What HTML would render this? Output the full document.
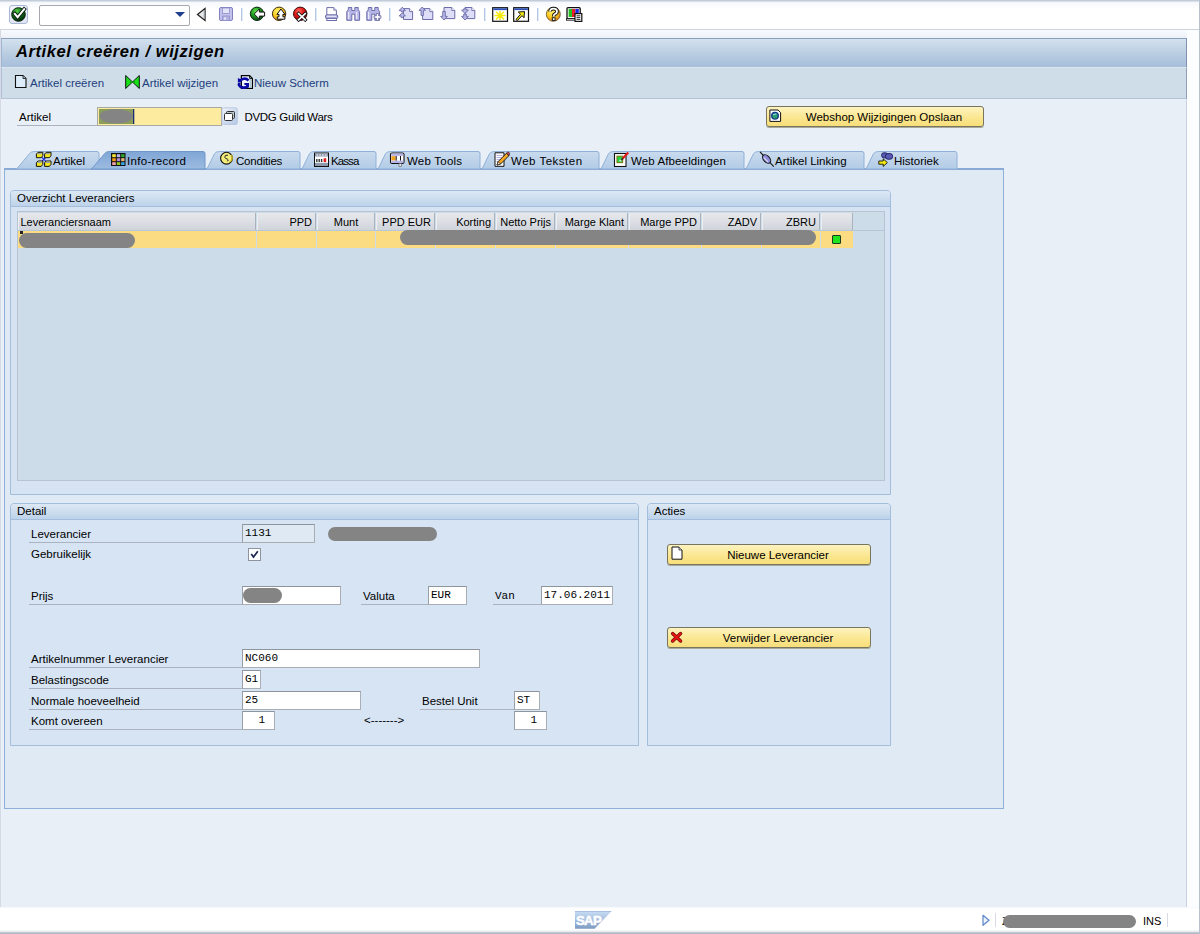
<!DOCTYPE html>
<html lang="nl">
<head>
<meta charset="utf-8">
<title>Artikel creëren / wijzigen</title>
<style>
*{box-sizing:border-box;margin:0;padding:0}
html,body{width:1200px;height:934px;overflow:hidden;background:#e9eff7}
body{position:relative;font-family:"Liberation Sans","DejaVu Sans",sans-serif;font-size:11.5px;color:#000;line-height:14px}
.abs,.abs *{position:absolute}
.abs .t,.t{position:absolute;white-space:nowrap}
.mono{font-family:"Liberation Mono","DejaVu Sans Mono",monospace;font-size:11px}

/* ---------- system toolbar ---------- */
#sys{left:0;top:0;width:1200px;height:38px;background:linear-gradient(#f3f5fa 0,#fff 9px,#fff 29px,#cdd3da 29px,#cdd3da 30px,#fbfcfe 30px,#f4f7fb 32px,#edf1f8 38px)}
#sys .topline{left:0;top:0;width:1200px;height:2px;background:linear-gradient(#b7c2d3,#e6eaf1)}
#okbtn{left:9px;top:5px;width:19px;height:19px;border:1px solid #a9b8d8;border-radius:3px;background:linear-gradient(#f4f6fb,#dfe5f1)}
#cmd{left:39px;top:5px;width:151px;height:21px;border:1px solid #a5a8ad;border-radius:2px;background:#fff}
.sep{width:1px;height:12px;top:9px;background:#b9c9e3}

/* ---------- title + app toolbar ---------- */
#rightstrip{left:1187px;top:30px;width:13px;height:878px;background:#fcfdfe}
#redge{left:1199px;top:0;width:1px;height:934px;background:#b9c1cd}
#title{left:1px;top:38px;width:1186px;height:29px;background:linear-gradient(#d6e3f0 0,#cfdeed 8%,#c0d2e4 40%,#b1c7df 72%,#a8bfdc 100%);border-top:1px solid #8aa0bd;border-left:1px solid #9fb4d0;border-right:1px solid #7f93b0}
#title .t{left:14px;top:2px;font-size:16.5px;line-height:20px;font-weight:bold;font-style:italic;letter-spacing:.58px}
#app{left:1px;top:67px;width:1186px;height:32px;background:#cfdde9;border-left:1px solid #aebfd6;border-right:1px solid #8d9fb9;border-bottom:1px solid #b4c3d6;border-top:1px solid #dbe6f0}
#app .t{color:#223f7c;top:8px}
#mainL{left:0;top:30px;width:1px;height:878px;background:#d6dae6}
#mainR{left:1186px;top:99px;width:1px;height:809px;background:#c8d2e2}

/* ---------- status bar ---------- */
#status{left:0;top:907px;width:1200px;height:27px;background:linear-gradient(#f4f7fb 0,#fff 2px)}
#status .bline{left:0;top:23px;width:1200px;height:4px;background:linear-gradient(#fbfbfc 0,#e4e7ec 45%,#b4bcc8 70%,#aeb6c2 100%)}

/* ---------- fields ---------- */
.lbl{height:18px;border-bottom:1px solid #aab3bf;line-height:16px;padding:1px 0 0 2px;white-space:nowrap}
.inp{height:19px;background:#fff;border:1px solid #a9aeb5;border-top-color:#8e949c;border-left-color:#9a9fa7;line-height:16px;padding-left:2px;white-space:nowrap;overflow:hidden}
.inp.ro{background:#dfe9f4}
.red{background:#848484;border-radius:9px}
.btn .bt{position:static;padding-left:18px}
.btn{height:21px;border:1px solid #77745f;border-radius:3px;background:linear-gradient(#fdf3c0 0,#fbe894 50%,#f8de7a 100%);text-align:center;line-height:20px;box-shadow:0 1px 0 #a9a99a}


/* ---------- table ---------- */
.th{top:1px;height:17px;line-height:17px;padding-top:1px;font-size:11px;background:linear-gradient(#e6e8eb,#dcdfe4 50%,#cfd4db);border-right:1px solid #aab2bd;border-left:1px solid #eceef1;white-space:nowrap;overflow:hidden}
.td{top:19px;height:17px;background:#fcdc82}
.hline{height:1px;background:#b8c6d8}

/* ---------- tabs ---------- */
#tabpanel{left:4px;top:168px;width:1000px;height:641px;background:#dfeaf4;border:1px solid #8fb0d8;border-top:2px solid #88abd6}
.tabtxt{top:153.5px}

/* ---------- group boxes ---------- */
.grp{border:1px solid #a3bddd;border-radius:4px 4px 0 0;background:#d6e4f4}
.grp .hd{left:0;top:0;right:0;height:16px;background:linear-gradient(#dde8f4,#bdd3ea);border-bottom:1px solid #a3bddd;border-radius:3px 3px 0 0}
.grp .hd .t{left:6px;top:0}
</style>
</head>
<body class="abs">

<!-- ===== system toolbar ===== -->
<div id="sys">
  <div class="topline"></div>
  <div id="okbtn"></div>
  <div id="cmd"></div>
</div>
<svg id="sysicons" style="left:0;top:0" width="600" height="30" viewBox="0 0 600 30">
  <defs>
    <radialGradient id="rgG" cx="0.4" cy="0.3" r="0.7"><stop offset="0" stop-color="#5fe04a"/><stop offset="0.5" stop-color="#1f9a1f"/><stop offset="1" stop-color="#0a4a12"/></radialGradient>
    <radialGradient id="rgG2" cx="0.4" cy="0.25" r="0.75"><stop offset="0" stop-color="#58d048"/><stop offset="0.45" stop-color="#147a1a"/><stop offset="1" stop-color="#052a0c"/></radialGradient>
    <radialGradient id="rgY" cx="0.4" cy="0.3" r="0.75"><stop offset="0" stop-color="#fff36a"/><stop offset="0.55" stop-color="#f7c81e"/><stop offset="1" stop-color="#d9781a"/></radialGradient>
    <radialGradient id="rgR" cx="0.4" cy="0.3" r="0.75"><stop offset="0" stop-color="#ff6a5a"/><stop offset="0.5" stop-color="#e01616"/><stop offset="1" stop-color="#7e0808"/></radialGradient>
  </defs>
  <!-- enter / ok -->
  <circle cx="18.5" cy="14.5" r="6.8" fill="url(#rgG2)" stroke="#0a2010" stroke-width="1"/>
  <path d="M14.8 13.8 L17.6 17.2 L24.2 9.2" fill="none" stroke="#0a2010" stroke-width="3.8" stroke-linecap="square"/>
  <path d="M14.8 13.8 L17.6 17.2 L24.2 9.2" fill="none" stroke="#fff" stroke-width="2" stroke-linecap="square"/>
  <!-- dropdown arrow in command field -->
  <path d="M175 12 L185 12 L180 17 Z" fill="#1f3d8f"/>
  <!-- collapse triangle -->
  <path d="M205 8.5 L197.5 14.5 L205 20.5 Z" fill="#e9eaec" stroke="#222" stroke-width="1.3" stroke-linejoin="miter"/>
  <path d="M204.3 10 L204.3 19" stroke="#9aa0a8" stroke-width="1.2"/>
  <!-- save (disabled) -->
  <rect x="219.5" y="7.5" width="13" height="13" rx="1.5" fill="#c2c2ec" stroke="#8282c2"/>
  <rect x="222.5" y="8" width="7" height="5.5" fill="#e4e4f8" stroke="#9090cc" stroke-width=".8"/>
  <rect x="222.5" y="16" width="7" height="4.5" fill="#b3b3e2" stroke="#9090cc" stroke-width=".8"/>
  <rect x="224" y="17.3" width="2" height="2.4" fill="#e4e4f8"/>
  <!-- separators -->
  <g fill="#b3c8e6">
    <rect x="241" y="8" width="1.4" height="13"/><rect x="315" y="8" width="1.4" height="13"/><rect x="389" y="8" width="1.4" height="13"/><rect x="484" y="8" width="1.4" height="13"/><rect x="537" y="8" width="1.4" height="13"/>
  </g>
  <!-- back -->
  <circle cx="257" cy="13.8" r="6.7" fill="url(#rgG)" stroke="#0c2a14" stroke-width="1"/>
  <path d="M254.2 14 L259.4 9 L259.4 12.1 L264.6 12.1 L264.6 16.1 L259.4 16.1 L259.4 19.2 Z" fill="#fff" stroke="#111" stroke-width="1" stroke-linejoin="miter"/>
  <!-- exit -->
  <circle cx="279.1" cy="13.8" r="6.7" fill="url(#rgY)" stroke="#3a3010" stroke-width="1"/>
  <path d="M280.9 9 L285 14.4 L282.9 14.4 L282.9 16.8 L284.9 16.8 L284.9 19.2 L277.3 19.2 L277.3 16.8 L279 16.8 L279 14.4 L276.9 14.4 Z" fill="#fff" stroke="#111" stroke-width="1" stroke-linejoin="miter"/>
  <!-- cancel -->
  <circle cx="300.2" cy="13.8" r="6.7" fill="url(#rgR)" stroke="#3a0a0a" stroke-width="1"/>
  <path d="M298.6 13.6 L305.2 19.8 M305.2 13.6 L298.6 19.8" stroke="#111" stroke-width="3.3" stroke-linecap="square"/>
  <path d="M298.6 13.6 L305.2 19.8 M305.2 13.6 L298.6 19.8" stroke="#fff" stroke-width="1.7" stroke-linecap="square"/>
  <!-- print (disabled) -->
  <path d="M326.8 15 L326.8 7.6 L333.8 7.6 L336.4 10.2 L336.4 15 Z" fill="#fff" stroke="#6c6ca8" stroke-width="1"/>
  <path d="M333.8 7.6 L333.8 10.2 L336.4 10.2" fill="#dedef8" stroke="#6c6ca8" stroke-width=".8"/>
  <rect x="325.5" y="15" width="12.2" height="3.4" rx="1" fill="#b6b6e6" stroke="#6c6ca8" stroke-width="1"/>
  <path d="M327 16.2 L336.2 16.2" stroke="#fff" stroke-width=".9"/>
  <rect x="326.8" y="18.4" width="9.6" height="2.1" fill="#fff" stroke="#6c6ca8" stroke-width="1"/>
  <!-- find (disabled) -->
  <path d="M346.8 20.3 L346.8 11.5 L348.3 9.8 L348.3 7.5 L351.8 7.5 L351.8 10.5 L354.8 10.5 L354.8 7.5 L358.2 7.5 L358.2 9.8 L359.6 11.5 L359.6 20.3 L354.8 20.3 L354.8 14.2 L351.8 14.2 L351.8 20.3 Z" fill="#b6b6e6" stroke="#6c6ca8" stroke-width="1"/>
  <path d="M348.6 12 L348.6 19 M356.6 12 L356.6 19" stroke="#e9e9fb" stroke-width="1.2"/>
  <!-- find next (disabled) -->
  <path d="M366.8 20.3 L366.8 11.5 L368.3 9.8 L368.3 7.5 L371.8 7.5 L371.8 10.5 L374.8 10.5 L374.8 7.5 L378.2 7.5 L378.2 9.8 L379.6 11.5 L379.6 20.3 L374.8 20.3 L374.8 14.2 L371.8 14.2 L371.8 20.3 Z" fill="#b6b6e6" stroke="#6c6ca8" stroke-width="1"/>
  <path d="M368.6 12 L368.6 19" stroke="#e9e9fb" stroke-width="1.2"/>
  <path d="M376.3 13.6 L378.7 13.6 L378.7 15.8 L380.9 15.8 L380.9 18.2 L378.7 18.2 L378.7 20.4 L376.3 20.4 L376.3 18.2 L374.1 18.2 L374.1 15.8 L376.3 15.8 Z" fill="#fff" stroke="#6c6ca8" stroke-width=".9"/>
  <!-- page icons (disabled) -->
  <path d="M403.5 8.6 L409.6 8.6 L412.6 11.6 L412.6 19.5 L403.5 19.5 Z" fill="#dedef8" stroke="#6c6ca8" stroke-width="1"/><path d="M409.6 8.6 L409.6 11.6 L412.6 11.6" fill="#fff" stroke="#6c6ca8" stroke-width=".9"/>
  <path d="M402.3 7.2 L405.5 10.6 L403.5 10.6 L403.5 11.6 L401.1 11.6 L401.1 10.6 L399.1 10.6 Z" fill="#b6b6e6" stroke="#6c6ca8" stroke-width=".9"/><path d="M402.3 12.6 L405.5 16.0 L403.5 16.0 L403.5 17.6 L401.1 17.6 L401.1 16.0 L399.1 16.0 Z" fill="#b6b6e6" stroke="#6c6ca8" stroke-width=".9"/>
  <path d="M422.6 8.6 L429.8 8.6 L432.8 11.6 L432.8 19.5 L422.6 19.5 Z" fill="#dedef8" stroke="#6c6ca8" stroke-width="1"/><path d="M429.8 8.6 L429.8 11.6 L432.8 11.6" fill="#fff" stroke="#6c6ca8" stroke-width=".9"/>
  <path d="M422.2 7 L425.4 10.4 L423.4 10.4 L423.4 15.4 L421.0 15.4 L421.0 10.4 L419.0 10.4 Z" fill="#b6b6e6" stroke="#6c6ca8" stroke-width=".9"/>
  <path d="M444 7.5 L451.8 7.5 L454.8 10.5 L454.8 18.6 L444 18.6 Z" fill="#dedef8" stroke="#6c6ca8" stroke-width="1"/><path d="M451.8 7.5 L451.8 10.5 L454.8 10.5" fill="#fff" stroke="#6c6ca8" stroke-width=".9"/>
  <path d="M444 20 L447.4 16.4 L445.3 16.4 L445.3 11.4 L442.7 11.4 L442.7 16.4 L440.6 16.4 Z" fill="#b6b6e6" stroke="#6c6ca8" stroke-width=".9"/>
  <path d="M465 7.5 L471.8 7.5 L474.8 10.5 L474.8 18.6 L465 18.6 Z" fill="#dedef8" stroke="#6c6ca8" stroke-width="1"/><path d="M471.8 7.5 L471.8 10.5 L474.8 10.5" fill="#fff" stroke="#6c6ca8" stroke-width=".9"/>
  <path d="M465 13.6 L468.4 10.0 L466.3 10.0 L466.3 8.8 L463.7 8.8 L463.7 10.0 L461.6 10.0 Z" fill="#b6b6e6" stroke="#6c6ca8" stroke-width=".9"/><path d="M465 20 L468.4 16.4 L466.3 16.4 L466.3 14.2 L463.7 14.2 L463.7 16.4 L461.6 16.4 Z" fill="#b6b6e6" stroke="#6c6ca8" stroke-width=".9"/>
  <!-- new session -->
  <rect x="492.7" y="7.7" width="14.8" height="13.6" fill="#fff" stroke="#111" stroke-width="1.2"/>
  <rect x="493.3" y="8.3" width="13.6" height="1.8" fill="#2a50b8"/>
  <path d="M500 11 L500 20 M494.5 15.6 L505.5 15.6 M496 11.8 L504 19.4 M504 11.8 L496 19.4" stroke="#f4ea10" stroke-width="1.5"/>
  <!-- shortcut -->
  <rect x="513.7" y="7.7" width="14.8" height="13.6" fill="#fff" stroke="#111" stroke-width="1.2"/>
  <rect x="514.3" y="8.3" width="13.6" height="1.8" fill="#2a50b8"/>
  <path d="M516 19.5 L520.5 14.2 L518.3 12 L524.5 11.6 L524 17.8 L522 15.6 L517.4 20.6 Z" fill="#f4ea10" stroke="#111" stroke-width="1"/>
  <!-- help -->
  <circle cx="553.3" cy="14.3" r="7" fill="url(#rgY)" stroke="#6a5030" stroke-width=".8"/>
  <path d="M550 11.6 Q550 8.6 553.6 8.6 Q557 8.6 557 11.4 Q557 13.2 555 14 Q553.7 14.6 553.7 16.4" fill="none" stroke="#111" stroke-width="3.6"/>
  <path d="M550 11.6 Q550 8.6 553.6 8.6 Q557 8.6 557 11.4 Q557 13.2 555 14 Q553.7 14.6 553.7 16.4" fill="none" stroke="#fff" stroke-width="1.8"/>
  <rect x="552.3" y="17.8" width="2.8" height="2.6" fill="#fff" stroke="#111" stroke-width=".9"/>
  <!-- customise layout -->
  <rect x="567" y="7.6" width="13.2" height="11" rx="1" fill="#fff" stroke="#111" stroke-width="1.3"/>
  <rect x="568.6" y="9" width="3.4" height="8" fill="#22c222"/><rect x="572" y="9" width="3.4" height="8" fill="#e8202a"/><rect x="575.4" y="9" width="3.4" height="8" fill="#1a28e0"/>
  <rect x="566.5" y="18.6" width="9" height="1.6" fill="#ddd" stroke="#111" stroke-width=".8"/>
  <rect x="575" y="13.6" width="6.8" height="7.8" fill="#fff" stroke="#111" stroke-width="1.2"/>
  <path d="M576.5 15.8 L580.3 15.8 M576.5 17.6 L580.3 17.6 M576.5 19.4 L580.3 19.4" stroke="#111" stroke-width=".9"/>
</svg>

<div id="rightstrip"></div>
<div id="title"><span class="t">Artikel creëren / wijzigen</span></div>
<div id="app">
  <span class="t" style="left:28px">Artikel creëren</span>
  <span class="t" style="left:140px">Artikel wijzigen</span>
  <span class="t" style="left:252px">Nieuw Scherm</span>
</div>
<div id="mainL"></div><div id="mainR"></div>

<!-- ===== artikel row ===== -->
<div class="lbl" style="left:17px;top:108px;width:81px">Artikel</div>
<div class="inp" style="left:97px;top:107px;width:125px;background:#fdeca0;border-color:#a9a9a4"></div>
<span class="t" style="left:244.5px;top:110px;letter-spacing:-.33px">DVDG Guild Wars</span>
<div class="btn" style="left:766px;top:106px;width:218px"><span class="bt">Webshop Wijzigingen Opslaan</span></div>

<!-- ===== tab strip ===== -->
<div id="tabpanel"></div>
<svg id="tabs" style="left:0;top:148px" width="1010" height="24" viewBox="0 0 1010 24">
  <defs>
<linearGradient id="tgi" x1="0" y1="0" x2="0" y2="1"><stop offset="0" stop-color="#c9dbee"/><stop offset="1" stop-color="#b3cbe6"/></linearGradient>
<linearGradient id="tga" x1="0" y1="0" x2="0" y2="1"><stop offset="0" stop-color="#7fa6d6"/><stop offset="1" stop-color="#9dbbe0"/></linearGradient>
</defs>
  <path d="M16,21 L17.5,20 L29.5,5.7 Q31,3.5 34.5,3.5 L97,3.5 Q99,3.5 99,5.5 L99,21 Z" fill="url(#tgi)" stroke="#8fb0d8" stroke-width="1"/>
  <path d="M206,21 L207.5,20 L214.5,5.7 Q216,3.5 219.5,3.5 L298,3.5 Q300,3.5 300,5.5 L300,21 Z" fill="url(#tgi)" stroke="#8fb0d8" stroke-width="1"/>
  <path d="M301,21 L302.5,20 L309.5,5.7 Q311,3.5 314.5,3.5 L374,3.5 Q376,3.5 376,5.5 L376,21 Z" fill="url(#tgi)" stroke="#8fb0d8" stroke-width="1"/>
  <path d="M377,21 L378.5,20 L385.5,5.7 Q387,3.5 390.5,3.5 L478,3.5 Q480,3.5 480,5.5 L480,21 Z" fill="url(#tgi)" stroke="#8fb0d8" stroke-width="1"/>
  <path d="M481,21 L482.5,20 L489.5,5.7 Q491,3.5 494.5,3.5 L597,3.5 Q599,3.5 599,5.5 L599,21 Z" fill="url(#tgi)" stroke="#8fb0d8" stroke-width="1"/>
  <path d="M600,21 L601.5,20 L608.5,5.7 Q610,3.5 613.5,3.5 L742,3.5 Q744,3.5 744,5.5 L744,21 Z" fill="url(#tgi)" stroke="#8fb0d8" stroke-width="1"/>
  <path d="M745,21 L746.5,20 L753.5,5.7 Q755,3.5 758.5,3.5 L862,3.5 Q864,3.5 864,5.5 L864,21 Z" fill="url(#tgi)" stroke="#8fb0d8" stroke-width="1"/>
  <path d="M865,21 L866.5,20 L873.5,5.7 Q875,3.5 878.5,3.5 L955,3.5 Q957,3.5 957,5.5 L957,21 Z" fill="url(#tgi)" stroke="#8fb0d8" stroke-width="1"/>
  <path d="M91,21 L92.5,20 L104.5,5.7 Q106,3.5 109.5,3.5 L203,3.5 Q205,3.5 205,5.5 L205,21 Z" fill="url(#tga)" stroke="#6f97cb" stroke-width="1"/>
</svg>

<span class="t tabtxt" style="left:53px">Artikel</span>
<span class="t tabtxt" style="left:127px;letter-spacing:0.32px">Info-record</span>
<span class="t tabtxt" style="left:236px;letter-spacing:-0.2px">Condities</span>
<span class="t tabtxt" style="left:331px;letter-spacing:-0.9px">Kassa</span>
<span class="t tabtxt" style="left:407px;letter-spacing:0.22px">Web Tools</span>
<span class="t tabtxt" style="left:511px;letter-spacing:0.5px">Web Teksten</span>
<span class="t tabtxt" style="left:631px;letter-spacing:0.12px">Web Afbeeldingen</span>
<span class="t tabtxt" style="left:775px">Artikel Linking</span>
<span class="t tabtxt" style="left:894px">Historiek</span>

<!-- ===== Overzicht Leveranciers ===== -->
<div class="grp" id="g1" style="left:10px;top:190px;width:881px;height:305px;background:#d5e3f3">
  <div class="hd"><span class="t">Overzicht Leveranciers</span></div>
  <div id="tbl" style="left:6px;top:20px;width:868px;height:270px;background:#cddce9;border:1px solid #b9c3cf">
    <div class="th" style="left:0px;width:238px;text-align:left;padding-left:1.5px">Leveranciersnaam</div>
    <div class="td" style="left:0px;width:238px"></div>
    <div class="th" style="left:239px;width:59px;text-align:right;padding-right:3px">PPD</div>
    <div class="td" style="left:239px;width:59px"></div>
    <div class="th" style="left:299px;width:58px;text-align:center">Munt</div>
    <div class="td" style="left:299px;width:58px"></div>
    <div class="th" style="left:358px;width:59px;text-align:right;padding-right:3px">PPD EUR</div>
    <div class="td" style="left:358px;width:59px"></div>
    <div class="th" style="left:418px;width:59px;text-align:right;padding-right:3px">Korting</div>
    <div class="td" style="left:418px;width:59px"></div>
    <div class="th" style="left:478px;width:59px;text-align:right;padding-right:3px">Netto Prijs</div>
    <div class="td" style="left:478px;width:59px"></div>
    <div class="th" style="left:538px;width:72px;text-align:right;padding-right:3px">Marge Klant</div>
    <div class="td" style="left:538px;width:72px"></div>
    <div class="th" style="left:611px;width:72px;text-align:right;padding-right:3px">Marge PPD</div>
    <div class="td" style="left:611px;width:72px"></div>
    <div class="th" style="left:684px;width:59px;text-align:right;padding-right:3px">ZADV</div>
    <div class="td" style="left:684px;width:59px"></div>
    <div class="th" style="left:744px;width:58px;text-align:right;padding-right:3px">ZBRU</div>
    <div class="td" style="left:744px;width:58px"></div>
    <div class="th" style="left:803px;width:32px;text-align:center"></div>
    <div class="td" style="left:803px;width:32px"></div>
    <div class="hline" style="left:0;top:18px;width:867px"></div>
    <div class="red" style="left:1px;top:20.5px;width:116px;height:15px;border-radius:8px"></div>
    <div style="left:2px;top:19px;width:3px;height:3px;background:#222"></div>
    <div class="red" style="left:382px;top:18px;width:416px;height:15px;border-radius:8px"></div>
    <div style="left:814px;top:23px;width:9px;height:9px;background:#1de41d;border:1px solid #1c3a1c;border-radius:1px"></div>
  </div>
</div>

<!-- ===== Detail ===== -->
<div class="grp" id="g2" style="left:10px;top:503px;width:629px;height:243px">
  <div class="hd"><span class="t">Detail</span></div>
  <div class="lbl" style="left:18px;top:21px;width:214px">Leverancier</div>
  <div class="inp mono ro" style="left:231px;top:20px;width:73px;">1131</div>
  <div class="red" style="left:317px;top:23px;width:109px;height:14px;border-radius:7px"></div>
  <span class="t" style="left:20px;top:43px">Gebruikelijk</span>
  <div id="chk" style="left:237px;top:44px;width:13px;height:13px;background:#fff;border:1px solid #8d949e"><svg width="11" height="11" viewBox="0 0 11 11" style="left:0;top:0"><path d="M2.2 5 L4.5 8 L8.8 2.2" fill="none" stroke="#1d2450" stroke-width="1.7"/></svg></div>
  <div class="lbl" style="left:18px;top:83px;width:214px">Prijs</div>
  <div class="inp mono " style="left:231px;top:82px;width:99px;"></div>
  <div class="red" style="left:232px;top:84px;width:39px;height:15px;border-radius:8px"></div>
  <div class="lbl" style="left:350px;top:83px;width:68px">Valuta</div>
  <div class="inp mono " style="left:417px;top:82px;width:39px;">EUR</div>
  <div class="lbl mono" style="left:482px;top:83px;width:49px;font-size:11px">Van</div>
  <div class="inp mono " style="left:530px;top:82px;width:72px;">17.06.2011</div>
  <div class="lbl" style="left:18px;top:146px;width:214px">Artikelnummer Leverancier</div>
  <div class="inp mono " style="left:231px;top:145px;width:238px;">NC060</div>
  <div class="lbl" style="left:18px;top:167px;width:214px">Belastingscode</div>
  <div class="inp mono " style="left:231px;top:166px;width:19px;padding-left:2px">G1</div>
  <div class="lbl" style="left:18px;top:188px;width:214px">Normale hoeveelheid</div>
  <div class="inp mono " style="left:231px;top:187px;width:119px;">25</div>
  <div class="lbl" style="left:409px;top:188px;width:95px">Bestel Unit</div>
  <div class="inp mono " style="left:503px;top:187px;width:26px;">ST</div>
  <div class="lbl" style="left:18px;top:208px;width:214px">Komt overeen</div>
  <div class="inp mono " style="left:231px;top:207px;width:33px;text-align:right;padding-right:9px">1</div>
  <span class="t" style="left:353px;top:209px">&lt;-------&gt;</span>
  <div class="inp mono " style="left:503px;top:207px;width:33px;text-align:right;padding-right:9px">1</div>
</div>

<!-- ===== Acties ===== -->
<div class="grp" id="g3" style="left:647px;top:503px;width:244px;height:243px">
  <div class="hd"><span class="t">Acties</span></div>
  <div class="btn" style="left:19px;top:40px;width:204px"><span class="bt">Nieuwe Leverancier</span></div>
  <div class="btn" style="left:19px;top:123px;width:204px"><span class="bt">Verwijder Leverancier</span></div>
</div>

<svg id="icons" style="left:0;top:60px" width="1200" height="600" viewBox="0 60 1200 600">
  <!-- app toolbar: create doc -->
  <path d="M15.5 75.5 L23 75.5 L26 78.5 L26 87.5 L15.5 87.5 Z" fill="#dcecf8" stroke="#111" stroke-width="1.1"/>
  <path d="M23 75.5 L23 78.5 L26 78.5" fill="#9fb6cf" stroke="#111" stroke-width=".8"/>
  <!-- app toolbar: bowtie -->
  <path d="M125.7 75.5 L125.7 88.5 L132.5 82 Z M139.3 75.5 L139.3 88.5 L132.5 82 Z" fill="#18e018" stroke="#111" stroke-width="1"/>
  <path d="M130 79.8 L132.5 82 L130 84.2 Z M135 79.8 L132.5 82 L135 84.2 Z" fill="#0fa80f"/>
  <!-- app toolbar: refresh -->
  <path d="M241.4 75.6 L249.6 75.6 L252.4 78.4 L252.4 88.4 L241.4 88.4 Z" fill="#eef5fa" stroke="#000" stroke-width="1.2"/>
  <rect x="249.6" y="79" width="2.2" height="8.8" fill="#b4c8d2"/>
  <path d="M249.6 75.6 L249.6 78.4 L252.4 78.4 Z" fill="#88a4b4" stroke="#000" stroke-width=".9"/>
  <path d="M239.8 81.6 A4.8 4.2 0 0 1 248.4 80.6" fill="none" stroke="#0a0aa6" stroke-width="2.7"/>
  <path d="M237.9 78 L241.8 79.8 L241.4 82.2 L237.9 82.2 Z" fill="#0a0aa6"/>
  <path d="M238.8 83.7 A5 4.1 0 0 0 247.6 86.2" fill="none" stroke="#0a0aa6" stroke-width="2.7"/>
  <path d="M244.4 83.1 L249 83.1 L249 87.2 L246.2 87.2 L246.2 84.9 L244.4 84.9 Z" fill="#0a0aa6"/>
  <path d="M238 83.4 L240.6 83.4" stroke="#0a0aa6" stroke-width="1.4"/>
  <!-- artikel field: selection + redaction + cursor + F4 -->
  <rect x="99" y="109" width="34" height="15" fill="#8a9e5a"/>
  <ellipse cx="116.2" cy="116.3" rx="16.6" ry="7.3" fill="#848484"/>
  <rect x="133" y="109" width="1.3" height="15" fill="#1c2a78"/>
  <defs><linearGradient id="f4g" x1="0" y1="0" x2="1" y2="1"><stop offset="0" stop-color="#eef3fb"/><stop offset="1" stop-color="#b3c8e6"/></linearGradient></defs><rect x="222" y="107.8" width="15.3" height="16.6" rx="1.5" fill="url(#f4g)" stroke="#b4c2d8" stroke-width=".8"/>
  <rect x="226.5" y="111.5" width="8" height="7" rx="1" fill="#b9c6ca" stroke="#333" stroke-width="1"/>
  <rect x="224.5" y="113.5" width="8" height="7" rx="1" fill="#fff" stroke="#333" stroke-width="1"/>
  <!-- webshop button icon -->
  <path d="M769.9 110 L778 110 L780.6 112.6 L780.6 121.4 L769.9 121.4 Z" fill="#fff" stroke="#111" stroke-width="1"/>
  <circle cx="775" cy="115.8" r="3.3" fill="#2aa06a" stroke="#143a8a" stroke-width="1.4"/>
  <path d="M773 114.8 L776.4 113.8" stroke="#9ee0ff" stroke-width="1"/>
  <!-- tab1: artikel -->
  <path d="M41.5 156.8 L46.2 161.6 M46.2 156.8 L41.5 161.6" stroke="#1a28e0" stroke-width="1.2"/>
  <path d="M36.4 154.10000000000002 L38.0 152.3 L42.8 152.3 L42.8 155.70000000000002 L41.199999999999996 157.70000000000002 L36.4 157.70000000000002 Z" fill="#f4e61c" stroke="#111" stroke-width="1"/><path d="M38.3 152.9 L42.199999999999996 152.9 L41.0 154.3 L37.199999999999996 154.3 Z" fill="#98a4b6"/>
  <path d="M44.6 154.10000000000002 L46.2 152.3 L51.0 152.3 L51.0 155.70000000000002 L49.4 157.70000000000002 L44.6 157.70000000000002 Z" fill="#f4e61c" stroke="#111" stroke-width="1"/><path d="M46.5 152.9 L50.4 152.9 L49.2 154.3 L45.4 154.3 Z" fill="#98a4b6"/>
  <path d="M36.4 162.8 L38.0 161.0 L42.8 161.0 L42.8 164.4 L41.199999999999996 166.4 L36.4 166.4 Z" fill="#f4e61c" stroke="#111" stroke-width="1"/><path d="M38.3 161.6 L42.199999999999996 161.6 L41.0 163.0 L37.199999999999996 163.0 Z" fill="#98a4b6"/>
  <path d="M44.6 162.8 L46.2 161.0 L51.0 161.0 L51.0 164.4 L49.4 166.4 L44.6 166.4 Z" fill="#f4e61c" stroke="#111" stroke-width="1"/><path d="M46.5 161.6 L50.4 161.6 L49.2 163.0 L45.4 163.0 Z" fill="#98a4b6"/>
  <!-- tab2: info-record grid -->
  <rect x="111" y="153" width="14.5" height="13" fill="#111"/>
  <g>
    <rect x="112.2" y="154.2" width="3.6" height="3" fill="#f6e83a"/><rect x="116.8" y="154.2" width="3.4" height="3" fill="#b9b3e8"/><rect x="121.2" y="154.2" width="3.3" height="3" fill="#2ea82e"/>
    <rect x="112.2" y="158.2" width="3.6" height="3" fill="#f59a14"/><rect x="116.8" y="158.2" width="3.4" height="3" fill="#b48ad0"/><rect x="121.2" y="158.2" width="3.3" height="3" fill="#e8b87a"/>
    <rect x="112.2" y="162.2" width="3.6" height="2.8" fill="#f4a0aa"/><rect x="116.8" y="162.2" width="3.4" height="2.8" fill="#8ec822"/><rect x="121.2" y="162.2" width="3.3" height="2.8" fill="#3aa8f0"/>
  </g>
  <!-- tab3: condities coin -->
  <circle cx="226.5" cy="158.2" r="5.9" fill="#f4ec7a" stroke="#111" stroke-width="1.1"/>
  <path d="M230 162 A5.9 5.9 0 0 0 231.5 155" fill="none" stroke="#c9b820" stroke-width="1.4"/>
  <path d="M228 155.2 Q224.5 154.5 224.8 157.3 Q225.2 158.8 227.3 159 Q229 159.6 227.5 161.3" fill="none" stroke="#222" stroke-width="1"/>
  <!-- tab4: kassa -->
  <rect x="314.5" y="153" width="14" height="13.5" fill="#fff" stroke="#111" stroke-width="1"/>
  <rect x="315" y="153.5" width="13" height="3" fill="#8e99ab"/>
  <rect x="315" y="162.8" width="13" height="3.2" fill="#8e99ab"/>
  <path d="M316.5 155 h1.6 M319.3 155 h1.6 M322.1 155 h1.6 M324.9 155 h1.6" stroke="#fff" stroke-width="1.2"/>
  <path d="M316.8 159 v3 M319.2 159 v3 M321.6 159 v3" stroke="#333" stroke-width="1.4"/>
  <rect x="323.6" y="158.3" width="2.6" height="3.8" fill="#e01c1c"/>
  <!-- tab5: web tools -->
  <rect x="390.5" y="153" width="13.5" height="10.5" rx="1.5" fill="#fff" stroke="#111" stroke-width="1.1"/>
  <rect x="391.2" y="153.6" width="12.1" height="2.3" fill="#b7b3e6"/>
  <rect x="391.2" y="160.6" width="12.1" height="2.4" fill="#b7b3e6"/>
  <rect x="391.4" y="156.2" width="4.2" height="4.2" fill="#f2a01e"/>
  <path d="M396.2 156 v4.6 M400.5 156 v4.6" stroke="#111" stroke-width="1"/>
  <rect x="399" y="163.5" width="2.4" height="3" fill="#e4e8f0" stroke="#555" stroke-width=".6"/>
  <!-- tab6: web teksten -->
  <path d="M495 152.8 L504 152.8 L504 166.3 L495 166.3 Z" fill="#fff" stroke="#111" stroke-width="1"/>
  <path d="M496.5 155.5 h6 M496.5 157.5 h6 M496.5 159.5 h5 M496.5 161.5 h4" stroke="#b7b3e6" stroke-width="1"/>
  <path d="M497 165 L498.2 161.6 L506.5 153.2 L509 155.6 L500.6 164 Z" fill="#f5a623" stroke="#111" stroke-width=".9"/>
  <path d="M506.5 153.2 L507.6 152.2 Q509 151.8 509.6 153.4 L509 155.6 Z" fill="#e8505a" stroke="#111" stroke-width=".7"/>
  <path d="M497 165 L498.2 161.6 L500.6 164 Z" fill="#f8e0b0" stroke="#111" stroke-width=".6"/>
  <!-- tab7: web afbeeldingen -->
  <rect x="614.5" y="153.5" width="11.5" height="13" fill="#fff" stroke="#111" stroke-width="1.1"/>
  <rect x="617" y="156.2" width="5.6" height="6.4" fill="#1ed43a" stroke="#7a7a14" stroke-width="1.1"/>
  <rect x="619.4" y="159.6" width="2.4" height="1.8" fill="#d8e8d8"/>
  <path d="M622.2 159 L628.3 152.6" stroke="#e01c1c" stroke-width="2.2"/>
  <path d="M621.2 160.2 L623 158.2" stroke="#333" stroke-width="1.6"/>
  <!-- tab8: artikel linking -->
  <path d="M760 151.8 L773.8 166.6" stroke="#111" stroke-width="1.1"/>
  <ellipse cx="766.6" cy="159" rx="5" ry="3.1" transform="rotate(47 766.6 159)" fill="#8c8cd8" stroke="#111" stroke-width="1"/>
  <path d="M763.8 157.6 L768 162" stroke="#d8d8f6" stroke-width="1.2"/>
  <!-- tab9: historiek -->
  <rect x="881.6" y="152.8" width="6" height="5" rx="2.2" fill="#5a5ab4" stroke="#1a1a5e" stroke-width=".9"/>
  <rect x="885.4" y="153.6" width="7.2" height="5.6" rx="2.5" fill="#5a5ab4" stroke="#1a1a5e" stroke-width=".9"/>
  <path d="M878.8 161 L883.2 161 L883.2 158.8 L887.4 162.6 L883.2 166.4 L883.2 164.2 L878.8 164.2 Z" fill="#f4ea10" stroke="#111" stroke-width=".9"/>
  <!-- button icons -->
  <path d="M672 547 L679 547 L682 550 L682 559.2 L672 559.2 Z" fill="#fff" stroke="#111" stroke-width="1"/>
  <path d="M679 547 L679 550 L682 550" fill="#ddd" stroke="#111" stroke-width=".7"/>
  <path d="M672.6 633.6 L680.6 641 M680.6 633.6 L672.6 641" stroke="#6e0a0a" stroke-width="3.4" stroke-linecap="round"/>
  <path d="M672.6 633.6 L680.6 641 M680.6 633.6 L672.6 641" stroke="#e81414" stroke-width="2" stroke-linecap="round"/>
</svg>

<!-- ===== status bar ===== -->
<div id="status">
  <div class="bline"></div>
  <svg style="left:570px;top:1px" width="50" height="24" viewBox="570 908 50 24">
    <defs><linearGradient id="sapg" x1="0" y1="0" x2="0" y2="1"><stop offset="0" stop-color="#9ab4d8"/><stop offset=".08" stop-color="#c3d8f1"/><stop offset=".5" stop-color="#a5bfe0"/><stop offset="1" stop-color="#7d9ac2"/></linearGradient></defs>
    <path d="M575 911 L611.8 911 L594.6 928.8 L575 928.8 Z" fill="url(#sapg)"/>
    <text x="576" y="925.2" font-family="Liberation Sans, sans-serif" font-weight="bold" font-size="13.2" letter-spacing="-0.7" fill="#fff" stroke="#fff" stroke-width=".5">SAP</text>
  </svg>
  <svg style="left:978px;top:5px" width="16" height="16" viewBox="978 912 16 16"><path d="M983 915.3 L989 920.3 L983 925.3 Z" fill="#eef3fb" stroke="#5b86c8" stroke-width="1.2" stroke-linejoin="round"/></svg>
  <div style="left:995px;top:6px;width:1px;height:14px;background:#d9dde3"></div>
  <span class="t" style="left:1002px;top:7px">Z</span>
  <div class="red" style="left:1003px;top:8px;width:133px;height:13px;border-radius:7px"></div>
  <span class="t" style="left:1143px;top:7px;font-size:11px">INS</span>
  <div style="left:1167px;top:6px;width:1px;height:14px;background:#d9dde3"></div>
</div>

<div id="redge"></div>
</body>
</html>
